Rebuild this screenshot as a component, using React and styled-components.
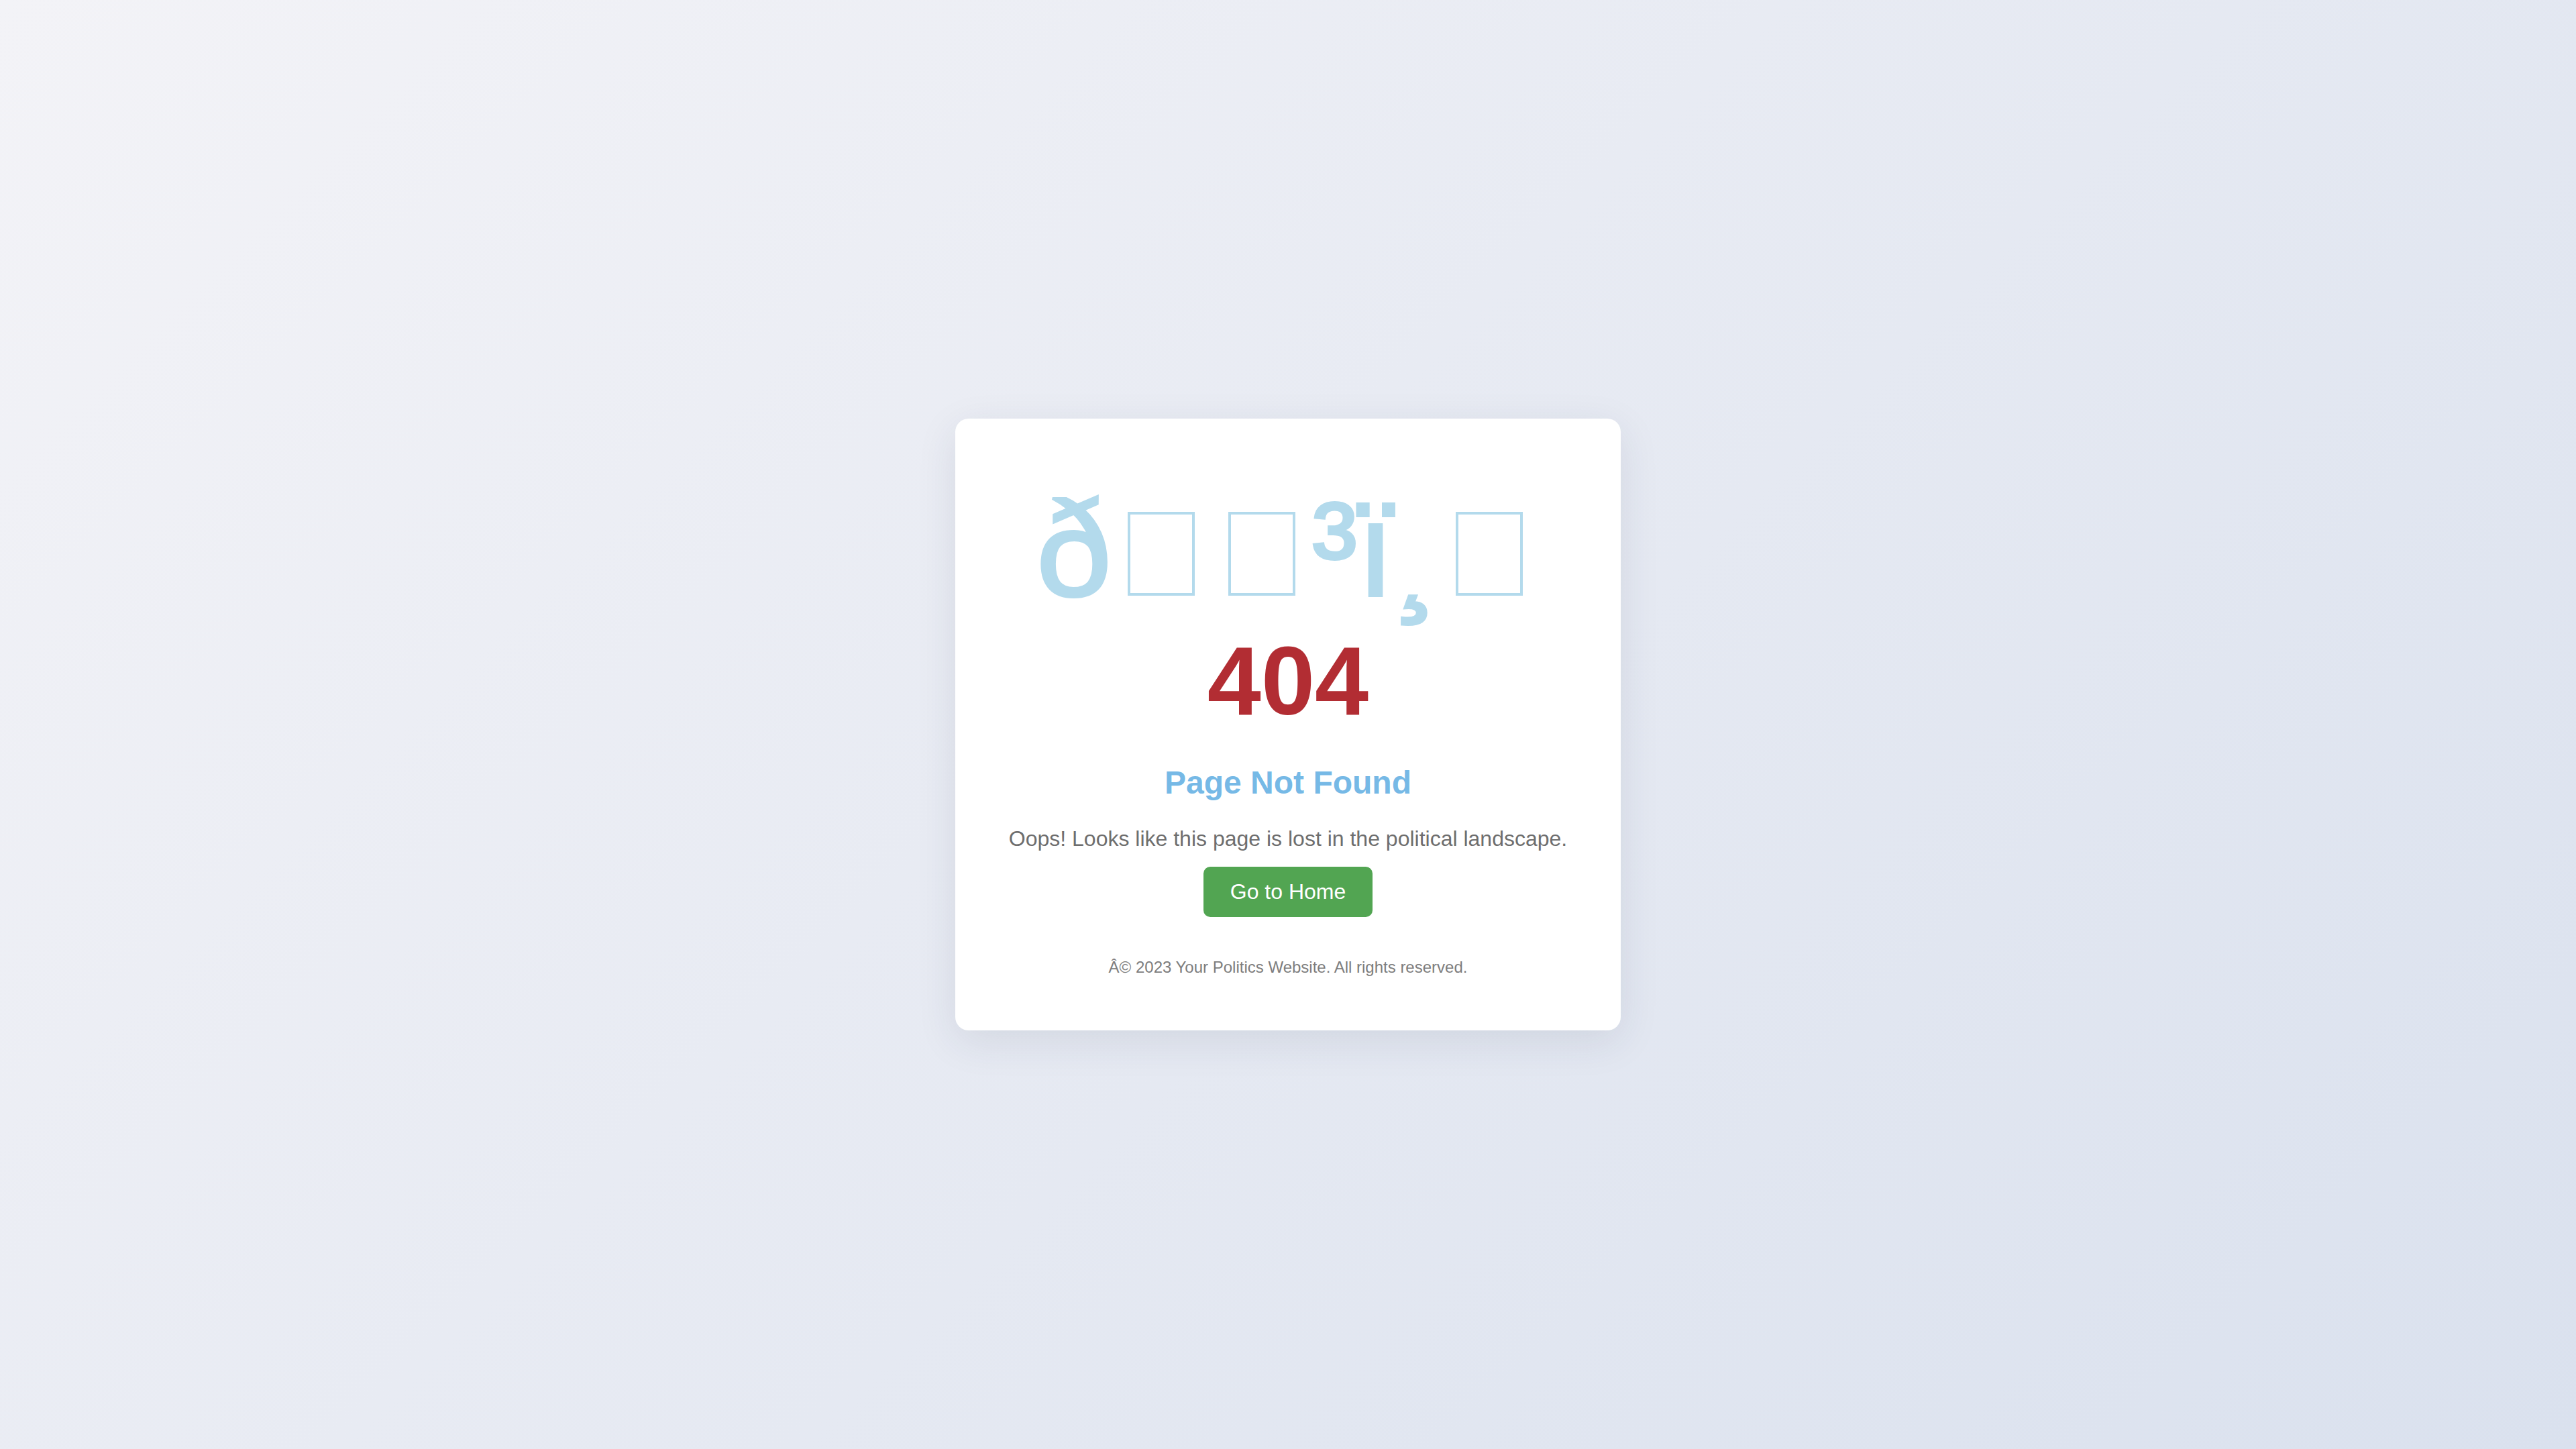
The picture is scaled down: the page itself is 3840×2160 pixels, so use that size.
import React from 'react';
import styled, { createGlobalStyle } from 'styled-components';

const GlobalStyle = createGlobalStyle`
  html, body {
    margin: 0;
    padding: 0;
  }
  body {
    font-family: "Liberation Sans", Arial, sans-serif;
    background: linear-gradient(135deg, #f3f3f7 0%, #dae1ee 100%);
    min-height: 100vh;
  }
`;

const Page = styled.main`
  min-height: 100vh;
  display: flex;
  align-items: center;
  justify-content: center;
`;

const Card = styled.section`
  background: #ffffff;
  border-radius: 20px;
  padding: 80px;
  box-shadow: 0 16px 60px rgba(40, 50, 80, 0.1);
  display: flex;
  flex-direction: column;
  align-items: center;
  text-align: center;
`;

const Emoji = styled.div`
  height: 229px;
  font-size: 200px;
  font-weight: 400;
  line-height: normal;
  color: #b3daec;
  white-space: nowrap;
  -webkit-text-stroke: 4px #b3daec;
`;

/* missing-glyph box shown for a control character of the garbled emoji */
const Tofu = styled.span`
  display: inline-block;
  box-sizing: border-box;
  width: 0.5em;
  height: 0.625em;
  margin: 0 0.125em;
  border: 4px solid currentColor;
  overflow: hidden;
  vertical-align: baseline;
  color: inherit;
  -webkit-text-stroke: 0;
`;

const Code = styled.h1`
  margin: 0;
  font-size: 144px;
  font-weight: 700;
  line-height: normal;
  color: #b22d33;
`;

const Title = styled.h2`
  margin: 40px 0 0;
  font-size: 48px;
  font-weight: 700;
  line-height: normal;
  color: #76b9e6;
`;

const Message = styled.p`
  margin: 38px 0 0;
  font-size: 32px;
  line-height: normal;
  color: #6e6e6e;
`;

const HomeButton = styled.a`
  margin-top: 23px;
  display: inline-block;
  padding: 19px 40px;
  font-size: 32px;
  line-height: normal;
  color: #ffffff;
  background: #52a552;
  border-radius: 10px;
  text-decoration: none;
`;

const Footer = styled.footer`
  margin-top: 61px;
  font-size: 24px;
  line-height: normal;
  color: #7d7d7d;
`;

export default function App() {
  return (
    <>
      <GlobalStyle />
      <Page>
        <Card>
          <Emoji>
            {'\u00F0'}
            <Tofu>{'\u009F'}</Tofu>
            <Tofu>{'\u0097'}</Tofu>
            {'\u00B3\u00EF\u00B8'}
            <Tofu>{'\u008F'}</Tofu>
          </Emoji>
          <Code>404</Code>
          <Title>Page Not Found</Title>
          <Message>Oops! Looks like this page is lost in the political landscape.</Message>
          <HomeButton href="#">Go to Home</HomeButton>
          <Footer>{'\u00C2\u00A9 2023 Your Politics Website. All rights reserved.'}</Footer>
        </Card>
      </Page>
    </>
  );
}
